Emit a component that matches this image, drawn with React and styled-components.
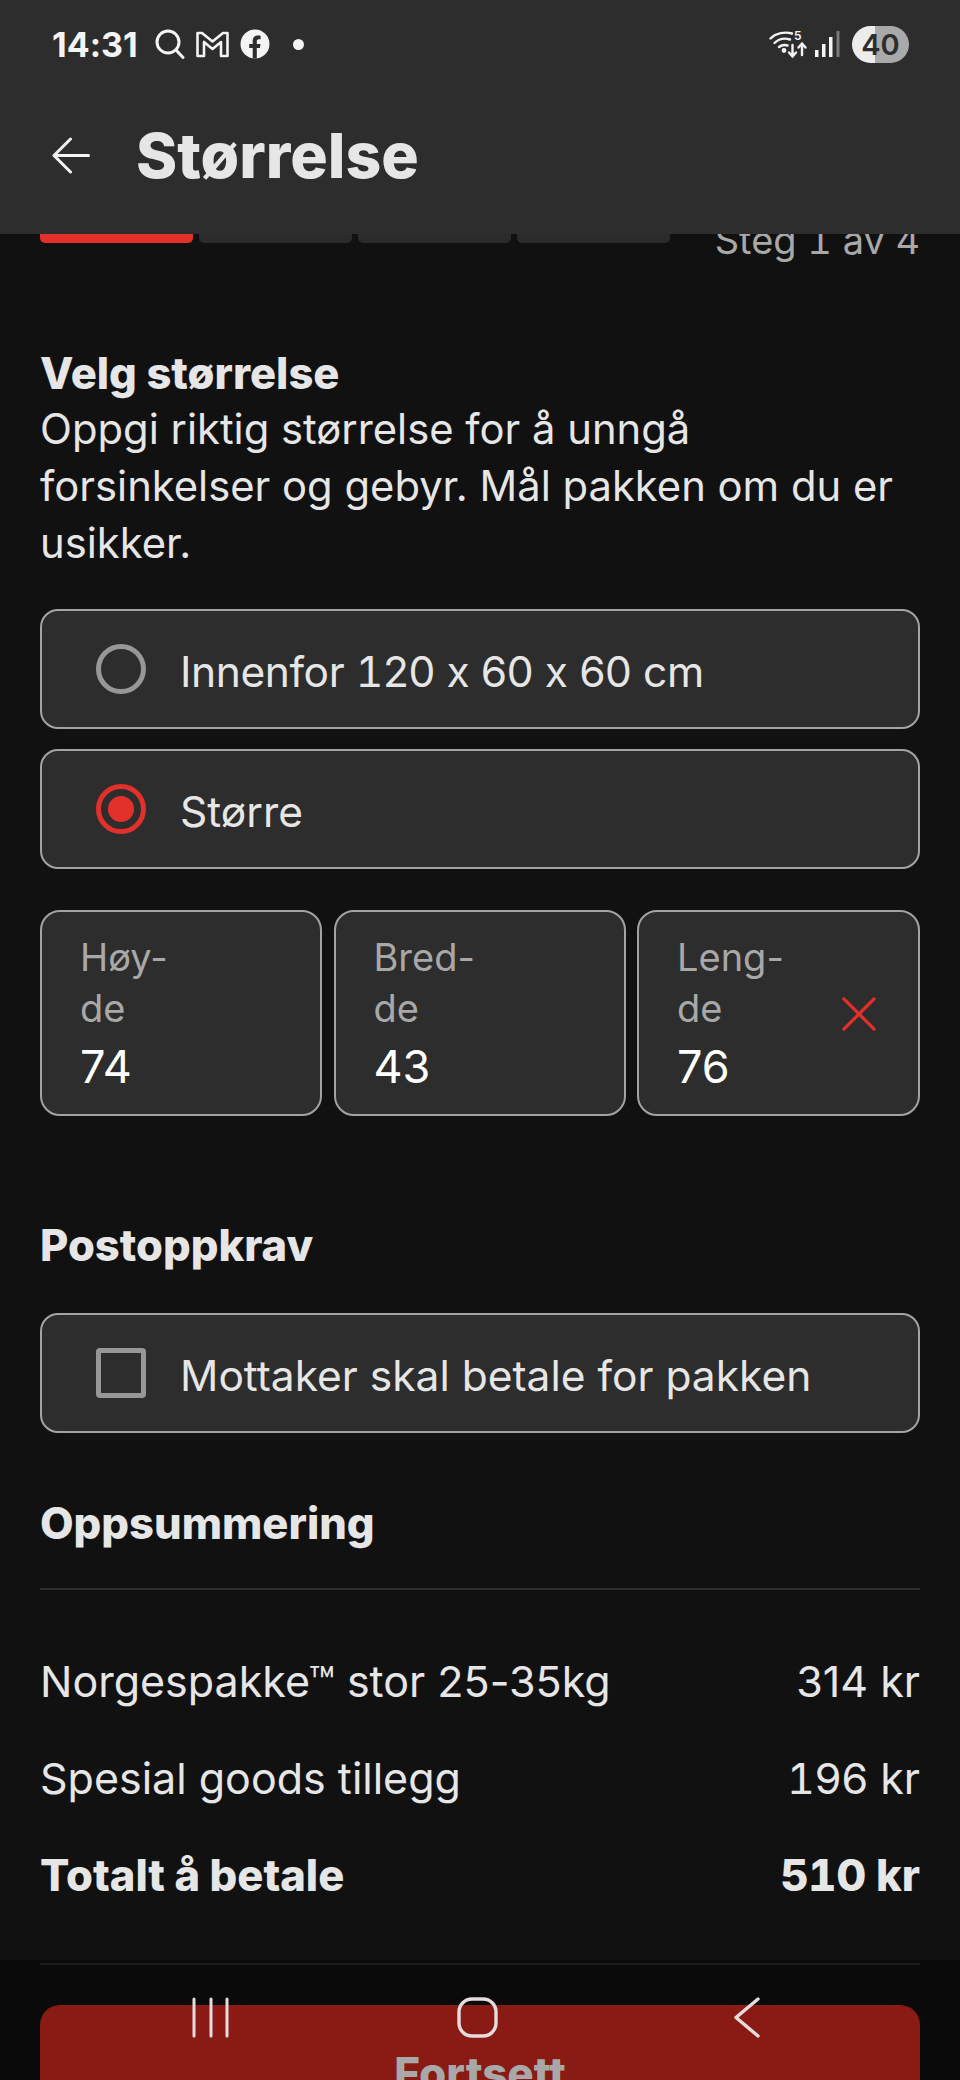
import React from 'react'
import styled, { createGlobalStyle } from 'styled-components'

// ============================================================ Styles

const Global = createGlobalStyle`
    html, body {
        margin: 0;
        padding: 0;
        background: #111111;
    }
    * {
        box-sizing: border-box;
    }
`

const Screen = styled.div`
    position: relative;
    width: 960px;
    height: 2080px;
    overflow: hidden;
    background: #111111;
    color: #e6e6e6;
    font-family: Inter, "Liberation Sans", sans-serif;
    font-feature-settings: "calt" 0;
`

// the digit one has a foot in the reference, only the tabular figure gives that
const One = styled.span`
    font-feature-settings: "calt" 0, "tnum" 1;
`

const Header = styled.header`
    position: relative;
    z-index: 2;
    height: 234px;
    background: #2d2d2d;
    padding: 0 52px;
`

const StatusBar = styled.div`
    display: flex;
    align-items: center;
    height: 88px;
`

const Clock = styled.span`
    font-size: 34px;
    font-weight: 700;
    color: #f4f4f4;
    width: 103px;
`

const StatusIcons = styled.div`
    display: flex;
    align-items: center;
    gap: 11px;
`

const StatusRight = styled.div`
    display: flex;
    align-items: center;
    margin-left: auto;
    margin-right: -1px;
    gap: 8px;
`

const Battery = styled.div`
    width: 57px;
    height: 37px;
    margin-left: 4px;
    border-radius: 19px;
    display: flex;
    align-items: center;
    justify-content: center;
    background: linear-gradient(90deg, #ececec 40%, #a9a9a9 40%);
    color: #2d2d2d;
    font-size: 29px;
    font-weight: 600;
`

const TitleRow = styled.div`
    display: flex;
    align-items: center;
    height: 88px;
    margin-top: 23px;
    gap: 46px;
`

const Title = styled.h1`
    margin: 0;
    font-size: 62.5px;
    font-weight: 800;
    color: #e6e6e6;
`

const Main = styled.main`
    padding: 0 40px;
`

const ProgressRow = styled.div`
    display: flex;
    align-items: flex-start;
    height: 9px;
`

const ProgressBar = styled.div`
    width: 153px;
    height: 9px;
    margin-right: 6px;
    border-radius: 0 0 5px 5px;
    background: ${({ $active }) => ($active ? '#e4302a' : '#2b2b2b')};
`

const StepLabel = styled.span`
    margin-left: auto;
    margin-top: -18px;
    font-size: 38px;
    line-height: 48px;
    color: #a8a8a8;
`

const Intro = styled.section`
    margin-top: 102px;
    font-size: 41.75px;
    line-height: 57px;
    color: #e6e6e6;
`

const Heading = styled.h2`
    margin: 0;
    font-size: 43.5px;
    line-height: 57px;
    font-weight: 800;
    color: #e6e6e6;
`

const IntroHeading = styled(Heading)`
    margin-bottom: -1px;
`

const Card = styled.label`
    display: flex;
    align-items: center;
    height: 120px;
    padding-left: 54px;
    gap: 34px;
    background: #2d2d2d;
    border: 2.5px solid #a3a3a3;
    border-radius: 18px;
    font-size: 42.5px;
    color: #e6e6e6;
`

const CardText = styled.span`
    padding-top: 4px;
    letter-spacing: ${({ $tight }) => ($tight ? '-0.4px' : '0')};
`

const RadioGroup = styled.div`
    display: flex;
    flex-direction: column;
    gap: 20px;
    margin-top: 37px;
`

const RadioMark = styled.span`
    display: flex;
    align-items: center;
    justify-content: center;
    width: 50px;
    height: 50px;
    border-radius: 50%;
    border: 5px solid ${({ $on }) => ($on ? '#e4302a' : '#979797')};

    &::after {
        content: '';
        display: ${({ $on }) => ($on ? 'block' : 'none')};
        width: 26px;
        height: 26px;
        border-radius: 50%;
        background: #e4302a;
    }
`

const CheckMark = styled.span`
    width: 50px;
    height: 50px;
    border: 5px solid #979797;
    border-radius: 4px;
`

const FieldRow = styled.div`
    display: flex;
    gap: 11.5px;
    margin-top: 41px;
`

const Field = styled.div`
    position: relative;
    width: ${({ $width }) => $width}px;
    height: 206px;
    padding: 20px 38px 0;
    background: #2d2d2d;
    border: 2.5px solid #a3a3a3;
    border-radius: 20px;
`

const FieldLabel = styled.div`
    font-size: 38px;
    line-height: 51px;
    color: #a8a8a8;
`

const FieldValue = styled.div`
    margin-top: 6px;
    font-size: 45px;
    line-height: 54px;
    color: #ffffff;
`

const ErrorIcon = styled.svg`
    position: absolute;
    top: 85px;
    right: 42px;
`

const CodSection = styled.section`
    margin-top: 101px;
`

const CodCard = styled(Card)`
    margin-top: 39px;
`

const SummarySection = styled.section`
    margin-top: 62px;
`

const Divider = styled.div`
    height: 2px;
    margin-top: 36px;
    background: #2d2d2d;
`

const SummaryList = styled.div`
    display: flex;
    flex-direction: column;
    gap: 40px;
    margin-top: 63px;
`

const SummaryRow = styled.div`
    display: flex;
    justify-content: space-between;
    font-size: ${({ $strong }) => ($strong ? 43.5 : 43)}px;
    line-height: 57px;
    font-weight: ${({ $strong }) => ($strong ? 800 : 400)};
    color: #e6e6e6;
`

const Footer = styled.footer`
    position: absolute;
    left: 0;
    right: 0;
    top: 1960px;
    bottom: 0;
    padding: 45px 40px 0;
    background: #0a0a0a;
    overflow: hidden;
`

const FooterLine = styled.div`
    position: absolute;
    top: 3px;
    left: 40px;
    right: 40px;
    height: 2px;
    background: #1c1c1c;
`

const ContinueButton = styled.button`
    display: block;
    width: 100%;
    height: 136px;
    padding: 0;
    border: 0;
    border-radius: 20px;
    background: #8a1b14;
    color: #a8a8a8;
    font-family: inherit;
    font-size: 44px;
    font-weight: 800;
`

const NavBar = styled.nav`
    position: absolute;
    z-index: 3;
    left: 0;
    right: 0;
    top: 1995px;
    height: 46px;
`

const NavIcon = styled.svg`
    position: absolute;
    top: 0;
    left: ${({ $left }) => $left}px;
`

// ============================================================ Icons

const SearchIcon = () => (
    <svg width="30" height="30" viewBox="0 0 30 30" fill="none" stroke="#f4f4f4" strokeWidth="3" strokeLinecap="round">
        <circle cx="13" cy="13" r="11" />
        <path d="M21 21 L28 28.5" />
    </svg>
)

const MailIcon = () => (
    <svg width="33" height="27" viewBox="0 0 33 27" fill="none" stroke="#f4f4f4" strokeWidth="2.6" strokeLinejoin="round">
        <path d="M1.5 2 H6 L16.5 10.5 L27 2 H31.5 V25 H25 V11 L16.5 18 L8 11 V25 H1.5 Z" />
    </svg>
)

const FacebookIcon = () => (
    <svg width="30" height="30" viewBox="0 0 30 30">
        <circle cx="15" cy="15" r="14.5" fill="#f4f4f4" />
        <path d="M12.7 29.5 V19 H9.2 V15 H12.7 V11.8 C12.7 8.3 14.8 6.5 17.9 6.5 C19.4 6.5 20.6 6.7 20.6 6.7 V10.2 H18.9 C17.2 10.2 16.8 11.2 16.8 12.3 V15 H20.5 L19.9 19 H16.8 V29.5 Z" fill="#2d2d2d" />
    </svg>
)

const DotIcon = styled.span`
    width: 11px;
    height: 11px;
    margin-left: 12px;
    border-radius: 50%;
    background: #f4f4f4;
`

const WifiIcon = () => (
    <svg width="38" height="30" viewBox="0 0 38 30" fill="none" stroke="#f4f4f4" strokeWidth="2.4" strokeLinecap="round">
        <path d="M1.5 9.5 C7 4 16 2.5 23 4.5" />
        <path d="M5.5 14 C10 9.5 16 9 21 10.5" />
        <path d="M10 18 C12.5 16 15.5 15.5 18.5 16.5" />
        <circle cx="15" cy="21.5" r="1.2" fill="#f4f4f4" />
        <path d="M23.5 16 V27 M20 23.5 L23.5 27.5 L27 23.5" />
        <path d="M33 26 V15 M29.5 18.5 L33 14.5 L36.5 18.5" />
        <text x="25" y="11" fontSize="12" fontWeight="600" fill="#f4f4f4" stroke="none" fontFamily="Inter, sans-serif">5</text>
    </svg>
)

const SignalIcon = () => (
    <svg width="25" height="26" viewBox="0 0 25 26">
        <rect x="0" y="19" width="3.5" height="7" fill="#f4f4f4" />
        <rect x="7" y="13" width="3.5" height="13" fill="#f4f4f4" />
        <rect x="14" y="6" width="3.5" height="20" fill="#f4f4f4" />
        <rect x="21.5" y="0" width="3" height="26" fill="#7a7a7a" />
    </svg>
)

const BackArrow = () => (
    <svg width="38" height="37" viewBox="0 0 38 37" fill="none" stroke="#f4f4f4" strokeWidth="3" strokeLinecap="round" strokeLinejoin="round">
        <path d="M36.5 18.5 H2 M18.5 2 L2 18.5 L18.5 35" />
    </svg>
)

// ============================================================ Logic

const FIELDS = [
    { id: 'h', top: 'Høy-', value: '74', width: 282 },
    { id: 'b', top: 'Bred-', value: '43', width: 292 },
    { id: 'l', top: 'Leng-', value: '76', width: 283, error: true },
]

const App = () => (
    <Screen>
        <Global />
        <Header>
            <StatusBar>
                <Clock>14:31</Clock>
                <StatusIcons>
                    <SearchIcon />
                    <MailIcon />
                    <FacebookIcon />
                    <DotIcon />
                </StatusIcons>
                <StatusRight>
                    <WifiIcon />
                    <SignalIcon />
                    <Battery>40</Battery>
                </StatusRight>
            </StatusBar>
            <TitleRow>
                <BackArrow />
                <Title>Størrelse</Title>
            </TitleRow>
        </Header>

        <Main>
            <ProgressRow>
                <ProgressBar $active />
                <ProgressBar />
                <ProgressBar />
                <ProgressBar />
                <StepLabel>Steg <One>1</One> av 4</StepLabel>
            </ProgressRow>

            <Intro>
                <IntroHeading>Velg størrelse</IntroHeading>
                Oppgi riktig størrelse for å unngå<br />
                forsinkelser og gebyr. Mål pakken om du er<br />
                usikker.
            </Intro>

            <RadioGroup>
                <Card>
                    <RadioMark />
                    <CardText $tight>Innenfor <One>1</One>20 x 60 x 60 cm</CardText>
                </Card>
                <Card>
                    <RadioMark $on />
                    <CardText>Større</CardText>
                </Card>
            </RadioGroup>

            <FieldRow>
                {FIELDS.map((field) => (
                    <Field key={field.id} $width={field.width}>
                        <FieldLabel>{field.top}<br />de</FieldLabel>
                        <FieldValue>{field.value}</FieldValue>
                        {field.error && (
                            <ErrorIcon width="34" height="34" viewBox="0 0 36 36" stroke="#e4302a" strokeWidth="3.4" strokeLinecap="round">
                                <path d="M2 2 L34 34 M34 2 L2 34" />
                            </ErrorIcon>
                        )}
                    </Field>
                ))}
            </FieldRow>

            <CodSection>
                <Heading>Postoppkrav</Heading>
                <CodCard>
                    <CheckMark />
                    <CardText>Mottaker skal betale for pakken</CardText>
                </CodCard>
            </CodSection>

            <SummarySection>
                <Heading>Oppsummering</Heading>
                <Divider />
                <SummaryList>
                    <SummaryRow>
                        <span>Norgespakke™ stor 25-35kg</span>
                        <span>314 kr</span>
                    </SummaryRow>
                    <SummaryRow>
                        <span>Spesial goods tillegg</span>
                        <span><One>1</One>96 kr</span>
                    </SummaryRow>
                    <SummaryRow $strong>
                        <span>Totalt å betale</span>
                        <span>5<One>1</One>0 kr</span>
                    </SummaryRow>
                </SummaryList>
            </SummarySection>
        </Main>

        <Footer>
            <FooterLine />
            <ContinueButton>Fortsett</ContinueButton>
        </Footer>

        <NavBar>
            <NavIcon $left={190} width="44" height="44" viewBox="0 0 44 44" stroke="#e6dcdc" strokeWidth="3" strokeLinecap="round">
                <path d="M4 4 V41 M21 4 V41 M37 4 V41" />
            </NavIcon>
            <NavIcon $left={456} width="44" height="44" viewBox="0 0 44 44" fill="none" stroke="#e6dcdc" strokeWidth="3.4">
                <rect x="3" y="4" width="37" height="37" rx="13" />
            </NavIcon>
            <NavIcon $left={730} width="34" height="44" viewBox="0 0 34 44" fill="none" stroke="#e6dcdc" strokeWidth="3.4" strokeLinecap="round" strokeLinejoin="round">
                <path d="M28 4 L6 22.5 L28 41" />
            </NavIcon>
        </NavBar>
    </Screen>
)

export default App
